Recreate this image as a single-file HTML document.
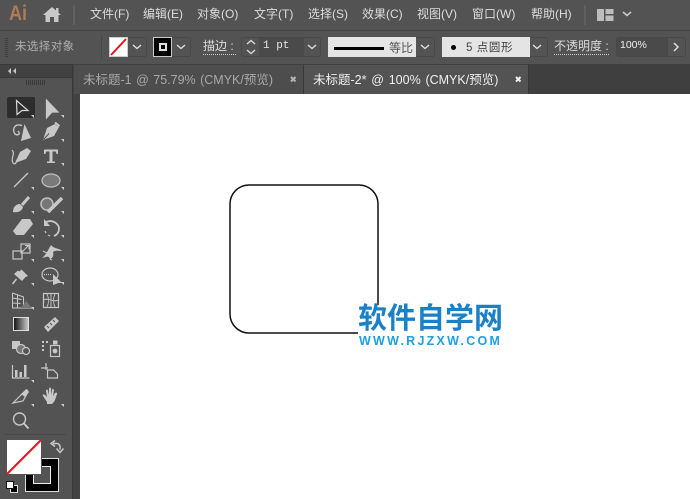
<!DOCTYPE html>
<html lang="zh"><head><meta charset="utf-8">
<style>
html,body{margin:0;padding:0}
body{width:690px;height:499px;overflow:hidden;background:#535353;position:relative;font-family:"Liberation Sans","Noto Sans CJK SC",sans-serif;color:#d4d4d4}
.a{position:absolute}
.t{position:absolute;white-space:nowrap;line-height:16px}
.b{position:absolute;box-sizing:border-box;border:1px solid #484848;border-radius:3px}
svg{position:absolute;left:0;top:0}
</style></head><body>
<!-- bars -->
<div class="a" style="left:0;top:0;width:690px;height:30px;background:#535353"></div>
<div class="a" style="left:0;top:30px;width:690px;height:1px;background:#424242"></div>
<div class="a" style="left:0;top:31px;width:690px;height:33px;background:#535353"></div>
<div class="a" style="left:0;top:64px;width:690px;height:30px;background:#3f3f3f"></div>
<div class="a" style="left:0;top:64px;width:72px;height:435px;background:#535353"></div>
<div class="a" style="left:0;top:64px;width:72px;height:1px;background:#3a3a3a"></div>
<div class="a" style="left:0;top:65px;width:72px;height:12px;background:#424242"></div>
<div class="a" style="left:0;top:77px;width:72px;height:1px;background:#383838"></div>
<div class="a" style="left:72px;top:64px;width:8px;height:435px;background:#424242"></div>
<div class="a" style="left:72px;top:64px;width:1px;height:435px;background:#383838"></div>
<div class="a" style="left:80px;top:94px;width:610px;height:405px;background:#fff"></div>
<!-- tabs -->
<div class="a" style="left:74px;top:65px;width:230px;height:29px;background:#4d4d4d"></div>
<div class="a" style="left:304px;top:65px;width:224px;height:29px;background:#535353"></div>
<div class="a" style="left:303px;top:65px;width:1px;height:29px;background:#383838"></div>
<div class="a" style="left:528px;top:65px;width:1px;height:29px;background:#383838"></div>
<div class="t" style="left:83px;top:72px;font-size:12.500px;color:#a8a8a8;word-spacing:1px">未标题-1 @ 75.79% (CMYK/预览)</div>
<div class="t" style="left:313px;top:72px;font-size:12.500px;color:#eee;word-spacing:1.300px">未标题-2* @ 100% (CMYK/预览)</div>
<!-- logo + menu -->
<div class="t" style="left:9px;top:2px;font-size:21px;line-height:24px;font-weight:bold;color:#b07a55;transform:scaleX(.86);transform-origin:0 0">Ai</div>
<svg width="690" height="499" viewBox="0 0 690 499">
<path d="M43 15 L52 7 L56 10.500 V8 H58.500 V12.700 L61 15 H58.500 V22 H54 V17 H50 V22 H45.500 V15 Z" fill="#c8c8c8"/>
<rect x="73" y="5" width="2" height="20" fill="#606060"/>
<rect x="584" y="5" width="2" height="20" fill="#606060"/>
<path d="M597 9h7v12h-7zM605.500 9h8v5h-8zM605.500 15.500h8v5.500h-8z" fill="#bdbdbd"/>
<path d="M623 12l4 3.500 4-3.500" fill="none" stroke="#ccc" stroke-width="1.500"/>
<path d="M5 38.500h3M5 40.500h3M5 42.500h3M5 44.500h3M5 46.500h3M5 48.500h3M5 50.500h3M5 52.500h3M5 54.500h3M5 56.500h3" stroke="#3e3e3e" stroke-width="1"/>
<rect x="101" y="35" width="1" height="24" fill="#474747"/>
</svg>
<div class="t" style="left:90px;top:6px;font-size:12px;color:#dcdcdc">文件(F)</div>
<div class="t" style="left:143px;top:6px;font-size:12px;color:#dcdcdc">编辑(E)</div>
<div class="t" style="left:197px;top:6px;font-size:12px;color:#dcdcdc">对象(O)</div>
<div class="t" style="left:254px;top:6px;font-size:12px;color:#dcdcdc">文字(T)</div>
<div class="t" style="left:308px;top:6px;font-size:12px;color:#dcdcdc">选择(S)</div>
<div class="t" style="left:362px;top:6px;font-size:12px;color:#dcdcdc">效果(C)</div>
<div class="t" style="left:417px;top:6px;font-size:12px;color:#dcdcdc">视图(V)</div>
<div class="t" style="left:472px;top:6px;font-size:12px;color:#dcdcdc">窗口(W)</div>
<div class="t" style="left:531px;top:6px;font-size:12px;color:#dcdcdc">帮助(H)</div>
<!-- control bar -->
<div class="t" style="left:15px;top:39px;font-size:11.500px;color:#adadad;letter-spacing:.4px">未选择对象</div>
<div class="b" style="left:128px;top:37px;width:19px;height:20px;border-left:0;border-radius:0 3px 3px 0"></div>
<div class="a" style="left:109px;top:37px;width:19px;height:20px;background:#fff;box-shadow:inset 0 0 0 1px #ccc"></div>
<div class="b" style="left:172px;top:37px;width:19px;height:20px;border-left:0;border-radius:0 3px 3px 0"></div>
<div class="a" style="left:153px;top:37px;width:19px;height:20px;background:#000;box-shadow:inset 0 0 0 1px #ccc"></div>
<div class="a" style="left:159px;top:43px;width:8px;height:8px;box-sizing:border-box;border:2px solid #e0e0e0;background:#000"></div>
<div class="t" style="left:203px;top:39px;font-size:12px;color:#dcdcdc;border-bottom:1px dotted #ccc;line-height:15px;padding-right:2px">描边 :</div>
<div class="b" style="left:241px;top:37px;width:80px;height:20px"></div>
<div class="a" style="left:259px;top:38px;width:45px;height:18px;background:#4a4a4a"></div>
<div class="t" style="left:263px;top:38px;font-size:11px;font-family:'Liberation Mono',monospace;color:#e6e6e6">1 pt</div>
<div class="a" style="left:328px;top:37px;width:88px;height:20px;background:#e4e4e4"></div>
<div class="a" style="left:334px;top:47px;width:50px;height:3px;background:#000"></div>
<div class="t" style="left:389px;top:40px;font-size:12px;color:#555">等比</div>
<div class="b" style="left:416px;top:37px;width:19px;height:20px;border-left:0;border-radius:0 3px 3px 0"></div>
<div class="a" style="left:442px;top:37px;width:88px;height:20px;background:#e4e4e4"></div>
<div class="a" style="left:451px;top:45px;width:5px;height:5px;border-radius:50%;background:#000"></div>
<div class="t" style="left:466px;top:40px;font-size:11.500px;color:#444;letter-spacing:.6px">5 点圆形</div>
<div class="b" style="left:530px;top:37px;width:18px;height:20px;border-left:0;border-radius:0 3px 3px 0"></div>
<div class="t" style="left:554px;top:39px;font-size:12px;color:#dcdcdc;border-bottom:1px dotted #ccc;line-height:15px">不透明度 :</div>
<div class="b" style="left:616px;top:37px;width:70px;height:20px"></div>
<div class="a" style="left:617px;top:38px;width:50px;height:18px;background:#4a4a4a"></div>
<div class="t" style="left:620px;top:37px;font-size:10.500px;color:#eee">100%</div>
<svg width="690" height="499" viewBox="0 0 690 499">
<path d="M111 55 L126 39" stroke="#e8141c" stroke-width="2"/>
<path d="M133 45l4 3.500 4-3.500M177 45l4 3.500 4-3.500M308 45l4 3.500 4-3.500M421 45l4 3.500 4-3.500M533 45l4 3.500 4-3.500" fill="none" stroke="#ddd" stroke-width="1.400"/>
<path d="M247 44l4-3.500 4 3.500M247 50l4 3.500 4-3.500" fill="none" stroke="#ddd" stroke-width="1.300"/>
<path d="M674 43l4 4-4 4" fill="none" stroke="#ddd" stroke-width="1.500"/>
<rect x="667" y="38" width="1" height="18" fill="#484848"/>
<!-- tab close -->
<path d="M291 77l4.500 4.500M295.500 77L291 81.500" stroke="#b5b5b5" stroke-width="2"/>
<path d="M516 77l4.500 4.500M520.500 77L516 81.500" stroke="#eee" stroke-width="2"/>
<!-- panel collapse and grip -->
<path d="M11 68l-3 3 3 3zM16 68l-3 3 3 3z" fill="#c8c8c8"/>
<path d="M26.500 80v5M28.500 80v5M30.500 80v5M32.500 80v5M34.500 80v5M36.500 80v5M38.500 80v5M40.500 80v5M42.500 80v5M44.500 80v5" stroke="#3a3a3a" stroke-width="1"/>
<!-- selected tool bg -->
<rect x="7" y="97" width="28" height="21" rx="2" fill="#2d2d2d"/>
<g fill="#c8c8c8" stroke="#c8c8c8" stroke-width="1.200">
<path d="M16.500 100.500 L28 110.500 L22 110.500 L17 114.500 Z" fill="#2d2d2d" stroke="#d6d6d6"/>
<path d="M46.500 100 L58 112 L52 112 L46.500 118 Z"/>
<!-- lasso / magic -->
<path d="M24.500 124 L31 138 L21 141 Z" stroke="none"/>
<path d="M22 125.500 C14 123 12 130 15 134 C18 136 21 134 18 131" fill="none" stroke-width="1.400"/>
<!-- pen -->
<path d="M59 127l-4-3-8 4-4 12 11-4z" stroke="none"/><path d="M43.500 139.500l5.500-6" stroke="#535353" stroke-width="1"/><path d="M55 122.500l4.500 3.500" fill="none" stroke-width="2"/>
<!-- curvature -->
<path d="M31 151l-4-3-7 4-5 11 11-4z" stroke="none"/>
<path d="M12 150 C16 154 10 158 13 163 C15 165 16 163 17 161" fill="none"/>
<!-- type -->
<path d="M44 149.500h14v4.500h-1.300l-1-2.500h-3.200v10h2.500v1.500h-8v-1.500h2.500v-10h-3.200l-1 2.500H44z" stroke="none"/>
<!-- line -->
<path d="M14 187 L28 173" fill="none" stroke-width="1.300"/>
<!-- ellipse -->
<ellipse cx="51" cy="180.500" rx="9" ry="6.500" fill="#7a7a7a" stroke="#c0c0c0"/>
<!-- brush -->
<path d="M29 197l-7 8" stroke-width="3" fill="none"/><path d="M13 212c0-5 3-8 7-8l3 3c-1 4-5 6-10 5z" stroke="none"/>
<!-- blob -->
<circle cx="47" cy="204" r="6" fill="#777" stroke="#c0c0c0" stroke-width="1.500"/>
<path d="M62 198l-14 14" stroke-width="3.500" fill="none"/>
<!-- eraser -->
<path d="M22 219h8l3 5-9 11h-8l-3-4z" stroke="none"/>
<!-- rotate -->
<path d="M46 222c7-3 13 2 13 7 0 3-2 6-5 7" fill="none" stroke-width="1.800"/>
<path d="M44 219v7h6z" stroke="none"/>
<path d="M45 231l1 2M48 235l2 1" fill="none"/>
<!-- scale -->
<rect x="13" y="251" width="9" height="8" fill="none"/><rect x="21" y="244" width="9" height="9" fill="none"/><path d="M22 252l6-6M25 245.500h4v4" fill="none" stroke-width="1"/>
<!-- puppet -->
<path d="M42 258c4-3 6-8 9-13 3 4 8 3 11 6-3 0-7-1-9 1 1 3 0 6-3 7-1-2-2-3-4-2z" stroke="none"/><path d="M43 251l4 2M50 259l2 1" fill="none"/>
<!-- pin -->
<path d="M21.500 269.500L28 276l-2.500 1L22 281l-8-7 4-3.500 1.500 1z" stroke="none"/><path d="M16.500 279l-4 5" fill="none" stroke-width="1.500"/>
<!-- shape builder -->
<ellipse cx="50" cy="274.500" rx="8" ry="6.500" fill="none"/>
<path d="M53 274 l9 9 -4 0 -2 1 -3 1 z" stroke="none"/><path d="M44 274.500h7" stroke-dasharray="1 1" fill="none"/>
<!-- perspective -->
<path d="M12.500 293v15h20M12.500 293l11 4v11M12.500 298l9 1.500M12.500 303l8 .5M17.500 295v13" fill="none" stroke-width="1"/><path d="M21 308l5-7 6 7z" fill="#777" stroke="none"/>
<!-- mesh -->
<rect x="43.500" y="293.500" width="15" height="14" fill="none"/><path d="M51 294v13M44 300c4-3 10 3 14 0M47 294c2 4 2 9 0 13M55 294c-2 4-2 9 0 13" fill="none" stroke-width=".9"/>
</g>
<defs><linearGradient id="g" x1="0" x2="1"><stop offset="0" stop-color="#111"/><stop offset="1" stop-color="#ccc"/></linearGradient></defs>
<rect x="13.500" y="317.500" width="15" height="13" fill="url(#g)" stroke="#ddd"/>
<g fill="#c8c8c8" stroke="#c8c8c8" stroke-width="1.200">
<!-- measure -->
<path d="M44 327l11-10 4 4-11 11z" stroke="none"/><path d="M49 328l-2-2M52 325l-2-2M55 322l-2-2" stroke="#535353" stroke-width="1" fill="none"/>
<!-- blend -->
<rect x="12" y="341" width="8" height="8" stroke="none"/><circle cx="21" cy="349" r="4.500" fill="#777"/><circle cx="26" cy="351" r="3.500" fill="#535353"/>
<!-- symbol sprayer -->
<path d="M42 341h2v2h-2zM46 341h2v2h-2zM42 345h2v2h-2zM42 349h2v2h-2z" stroke="none"/>
<rect x="50.500" y="345.500" width="9" height="11" fill="none"/><rect x="53" y="340.500" width="4.500" height="4" stroke="none"/><circle cx="55" cy="351" r="1.800"/>
<!-- chart -->
<path d="M12.500 365v13h17" fill="none"/><path d="M15 370h2.500v7H15zM19.500 372H22v5h-2.500zM24 365h2.500v12H24z" stroke="none"/>
<!-- artboard -->
<path d="M41 368h7M46 363v7" fill="none"/><path d="M47.500 370h6l4 4v4h-10z" fill="none"/>
<!-- knife -->
<path d="M13 403l13-13 2 2-5 9z" fill="none"/><path d="M21 394l6-5 2 3-4 5z" stroke="none"/>
<!-- hand -->
<path d="M47 402l-4-6c-1-2 1-2 2-1l2 2-1-6c0-2 2-2 2 0l1 4v-6c0-2 2-2 2 0v6l1-5c0-2 2-1 2 0l-1 6 2-3c1-1 3 0 2 1l-2 6c-1 2-2 3-3 4h-5z" stroke="none"/>
<!-- zoom -->
<circle cx="19.500" cy="419" r="6" fill="none" stroke-width="1.400"/><path d="M24 423.500l4.500 5" fill="none" stroke-width="2"/>
</g>
<!-- corner triangles -->
<path d="M34 118v-3h-3zM64 118v-3h-3zM64 142v-3h-3zM64 166v-3h-3zM34 190v-3h-3zM64 190v-3h-3zM34 214v-3h-3zM64 214v-3h-3zM34 238v-3h-3zM64 238v-3h-3zM34 262v-3h-3zM64 262v-3h-3zM34 286v-3h-3zM64 285v-3h-3zM34 310v-3h-3zM34 383v-3h-3zM34 407v-3h-3zM64 407v-3h-3z" fill="#cfcfcf"/>
<!-- divider -->
<rect x="5" y="434" width="61" height="1" fill="#484848"/>
<!-- fill stroke -->
<rect x="25.500" y="458.500" width="33" height="33" fill="#000" stroke="#ddd" stroke-width="1"/>
<rect x="33.500" y="466.500" width="17" height="17" fill="#535353" stroke="#eee" stroke-width="1"/>
<rect x="6.500" y="439.500" width="35" height="35" fill="#fff" stroke="#555"/>
<path d="M7 474 L41 440" stroke="#e8141c" stroke-width="2"/>
<path d="M53 443.500h4c2 0 3 2 3 3v3M56.500 448.500l3.500 4 3.500-4M55 440.500l-4 3 4 3" fill="none" stroke="#c8c8c8" stroke-width="1.500"/>
<rect x="10.500" y="485.500" width="7" height="7" fill="#000" stroke="#ddd"/>
<rect x="6.500" y="481.500" width="7" height="7" fill="#fff" stroke="#111"/>
<!-- art -->
<rect x="230" y="185" width="148" height="148" rx="19" fill="none" stroke="#111" stroke-width="1.500"/>
</svg>
<!-- watermark -->
<div class="a" style="left:358px;top:305px;width:145px;height:29px;background:#fff"></div>
<div class="t" style="left:358px;top:304px;font-size:29px;line-height:31px;font-weight:bold;color:#1b81c6">软件自学网</div>
<div class="t" style="left:359px;top:334px;font-size:12.500px;line-height:14px;font-weight:bold;color:#1f9fe6;letter-spacing:2.250px">WWW.RJZXW.COM</div>
</body></html>
